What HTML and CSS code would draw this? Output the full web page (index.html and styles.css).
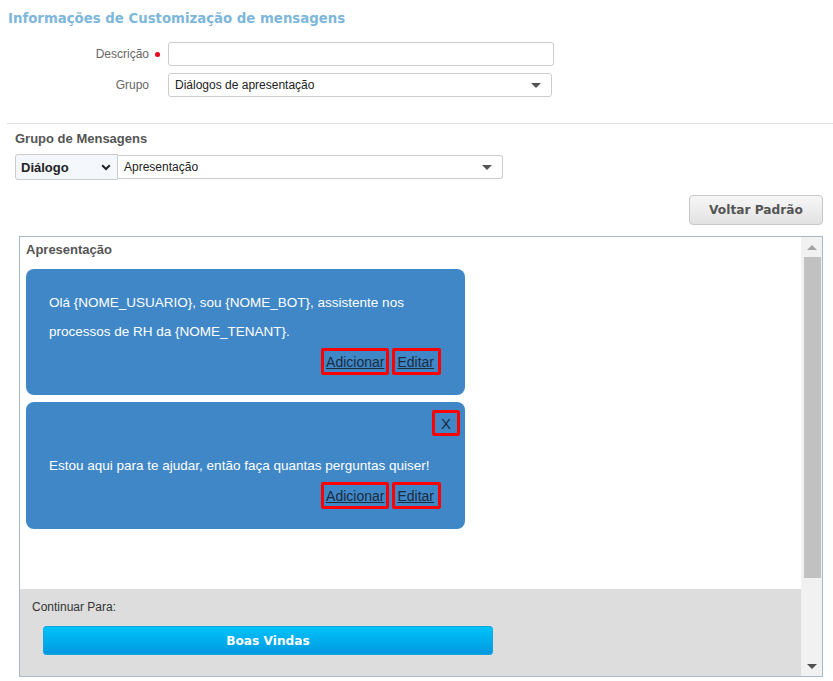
FILE: index.html
```html
<!DOCTYPE html>
<html lang="pt-BR">
<head>
	<meta charset="utf-8">
	<title>Customização de mensagens</title>
	<link rel="stylesheet" href="styles.css">
</head>
<body>
<h1 class="title">Informações de Customização de mensagens</h1>

<div class="form">
	<div class="row">
		<label class="label">Descrição</label>
		<span class="req"></span>
		<input class="input" type="text">
	</div>
	<div class="row">
		<label class="label">Grupo</label>
		<span class="req-none"></span>
		<div class="select wide">
			<span>Diálogos de apresentação</span>
			<i class="caret"></i>
		</div>
	</div>
</div>

<hr class="sep">

<h2 class="subtitle">Grupo de Mensagens</h2>
<div class="pick">
	<div class="kind">
		<span>Diálogo</span>
		<svg width="10" height="7" viewBox="0 0 10 7"><path d="M1.2 1.2 L5 5 L8.8 1.2" fill="none" stroke="#222" stroke-width="2"/></svg>
	</div>
	<div class="select group">
		<span>Apresentação</span>
		<i class="caret"></i>
	</div>
</div>

<div class="actions">
	<button class="btn-gray">Voltar Padrão</button>
</div>

<div class="panel">
	<div class="panel-main">
		<div class="messages">
			<div class="panel-title">Apresentação</div>

			<div class="bubble">
				<p>Olá {NOME_USUARIO}, sou {NOME_BOT}, assistente nos processos de RH da {NOME_TENANT}.</p>
				<div class="links">
					<a href="#" class="mark">Adicionar</a>
					<a href="#" class="mark">Editar</a>
				</div>
			</div>

			<div class="bubble">
				<div class="close-row"><a href="#" class="mark close">X</a></div>
				<p>Estou aqui para te ajudar, então faça quantas perguntas quiser!</p>
				<div class="links">
					<a href="#" class="mark">Adicionar</a>
					<a href="#" class="mark">Editar</a>
				</div>
			</div>
		</div>

		<div class="footer">
			<div class="footer-label">Continuar Para:</div>
			<button class="btn-blue">Boas Vindas</button>
		</div>
	</div>

	<div class="scrollbar">
		<div class="arrow up"></div>
		<div class="thumb"></div>
		<div class="track"></div>
		<div class="arrow down"></div>
	</div>
</div>
</body>
</html>
```

FILE: styles.css
```css
html,body
{
	margin: 0;
	padding: 0;
}

body
{
	width: 833px;
	height: 681px;
	overflow: hidden;
	background: #fff;
	font-family: "Liberation Sans", Arial, sans-serif;
	font-size: 12px;
	color: #333;
}

.title
{
	margin: 0;
	padding: 10px 0 0 8px;
	height: 18px;
	color: #7db7db;
	font-family: "DejaVu Sans", Verdana, sans-serif;
	font-size: 13.3px;
	font-weight: bold;
	line-height: 18px;
}

.form
{
	display: flex;
	flex-direction: column;
	gap: 7px;
	padding-top: 14px;
}

.row
{
	display: flex;
	align-items: center;
}

.label
{
	width: 149px;
	color: #666;
	text-align: right;
}

.req,
.req-none
{
	width: 5px;
	height: 5px;
	margin: 0 8px 0 6px;
	border-radius: 50%;
}

.req
{
	background: #e8001c;
}

.input
{
	box-sizing: border-box;
	width: 386px;
	height: 24px;
	border: 1px solid #ccc;
	border-radius: 3px;
	margin: 0;
	outline: none;
}

.select
{
	box-sizing: border-box;
	display: flex;
	align-items: center;
	justify-content: space-between;
	height: 24px;
	padding: 0 10px 0 6px;
	border: 1px solid #ccc;
	border-radius: 3px;
	background: #fff;
	color: #222;
}

.select.wide
{
	width: 384px;
}

.caret
{
	width: 0;
	height: 0;
	border-left: 5px solid transparent;
	border-right: 5px solid transparent;
	border-top: 5px solid #555;
}

.sep
{
	height: 0;
	margin: 26px 0 0 7px;
	border: 0;
	border-top: 1px solid #ddd;
}

.subtitle
{
	margin: 0;
	padding: 6px 0 0 15px;
	height: 18px;
	color: #555;
	font-size: 13px;
	font-weight: bold;
	line-height: 18px;
}

.pick
{
	display: flex;
	align-items: center;
	margin: 6px 0 0 15px;
}

.kind
{
	box-sizing: border-box;
	display: flex;
	align-items: center;
	justify-content: space-between;
	width: 103px;
	height: 26px;
	padding: 0 6px 0 5px;
	border: 1px solid #ccc;
	border-radius: 3px 0 0 3px;
	background: #f4f7fc;
	color: #222;
	font-size: 13px;
	font-weight: bold;
}

.select.group
{
	width: 385px;
	border-left: 0;
	border-radius: 0 3px 3px 0;
}

.actions
{
	display: flex;
	justify-content: flex-end;
	padding: 15px 10px 0 0;
}

.btn-gray
{
	width: 134px;
	height: 30px;
	border: 1px solid #c8c8c8;
	border-radius: 4px;
	background: linear-gradient(#f7f7f7, #e2e2e2);
	color: #555;
	font-family: "DejaVu Sans", Verdana, sans-serif;
	font-size: 12.2px;
	font-weight: bold;
}

.panel
{
	display: flex;
	box-sizing: border-box;
	width: 804px;
	height: 441px;
	margin: 11px 0 0 19px;
	border: 1px solid #a6b9cd;
}

.panel-main
{
	display: flex;
	flex: 1;
	flex-direction: column;
}

.messages
{
	flex: 1;
	padding: 0 0 0 6px;
}

.panel-title
{
	padding-top: 4px;
	height: 18px;
	color: #555;
	font-size: 13px;
	font-weight: bold;
	line-height: 18px;
}

.bubble
{
	width: 439px;
	box-sizing: border-box;
	margin-top: 10px;
	padding: 19px 24px 20px 23px;
	border-radius: 8px;
	background: #3f87c7;
	color: #fff;
	font-family: "Liberation Sans", Arial, sans-serif;
	font-size: 13.5px;
}

.bubble + .bubble
{
	margin-top: 7px;
	padding-top: 8px;
}

.bubble p
{
	margin: 0;
	line-height: 29px;
}

.links
{
	display: flex;
	justify-content: flex-end;
	gap: 3px;
	margin-top: 2px;
}

.mark
{
	box-sizing: border-box;
	display: flex;
	align-items: center;
	justify-content: center;
	height: 27px;
	padding: 0 2px;
	border: 3px solid #f00;
	border-radius: 2px;
	color: #1d2b3c;
	font-size: 14px;
	text-decoration: underline;
}

.links .mark + .mark
{
	padding: 0 4px 0 2px;
}

.close-row
{
	display: flex;
	justify-content: flex-end;
	margin: 0 -19px 15px 0;
}

.mark.close
{
	width: 28px;
	height: 26px;
	text-decoration: none;
	font-size: 15px;
}

.footer
{
	height: 87px;
	background: #ddd;
}

.footer-label
{
	padding: 11px 0 0 12px;
	height: 15px;
	line-height: 15px;
	color: #333;
}

.btn-blue
{
	display: block;
	width: 450px;
	height: 29px;
	margin: 11px 0 0 23px;
	border: 1px solid #13a7e0;
	border-radius: 3px;
	background: linear-gradient(#00c3fa, #0098e0);
	color: #fff;
	font-family: "DejaVu Sans", Verdana, sans-serif;
	font-size: 12.2px;
	font-weight: bold;
}

.scrollbar
{
	display: flex;
	flex-direction: column;
	width: 21px;
	background: #f1f1f1;
}

.arrow
{
	display: flex;
	align-items: center;
	justify-content: center;
	height: 20px;
}

.arrow::before
{
	content: "";
	border-left: 5px solid transparent;
	border-right: 5px solid transparent;
}

.arrow.up::before
{
	border-bottom: 5px solid #a3a3a3;
}

.arrow.down::before
{
	border-top: 5px solid #505050;
}

.thumb
{
	height: 321px;
	margin: 0 1px 0 3px;
	background: #c1c1c1;
}

.track
{
	flex: 1;
}
```
